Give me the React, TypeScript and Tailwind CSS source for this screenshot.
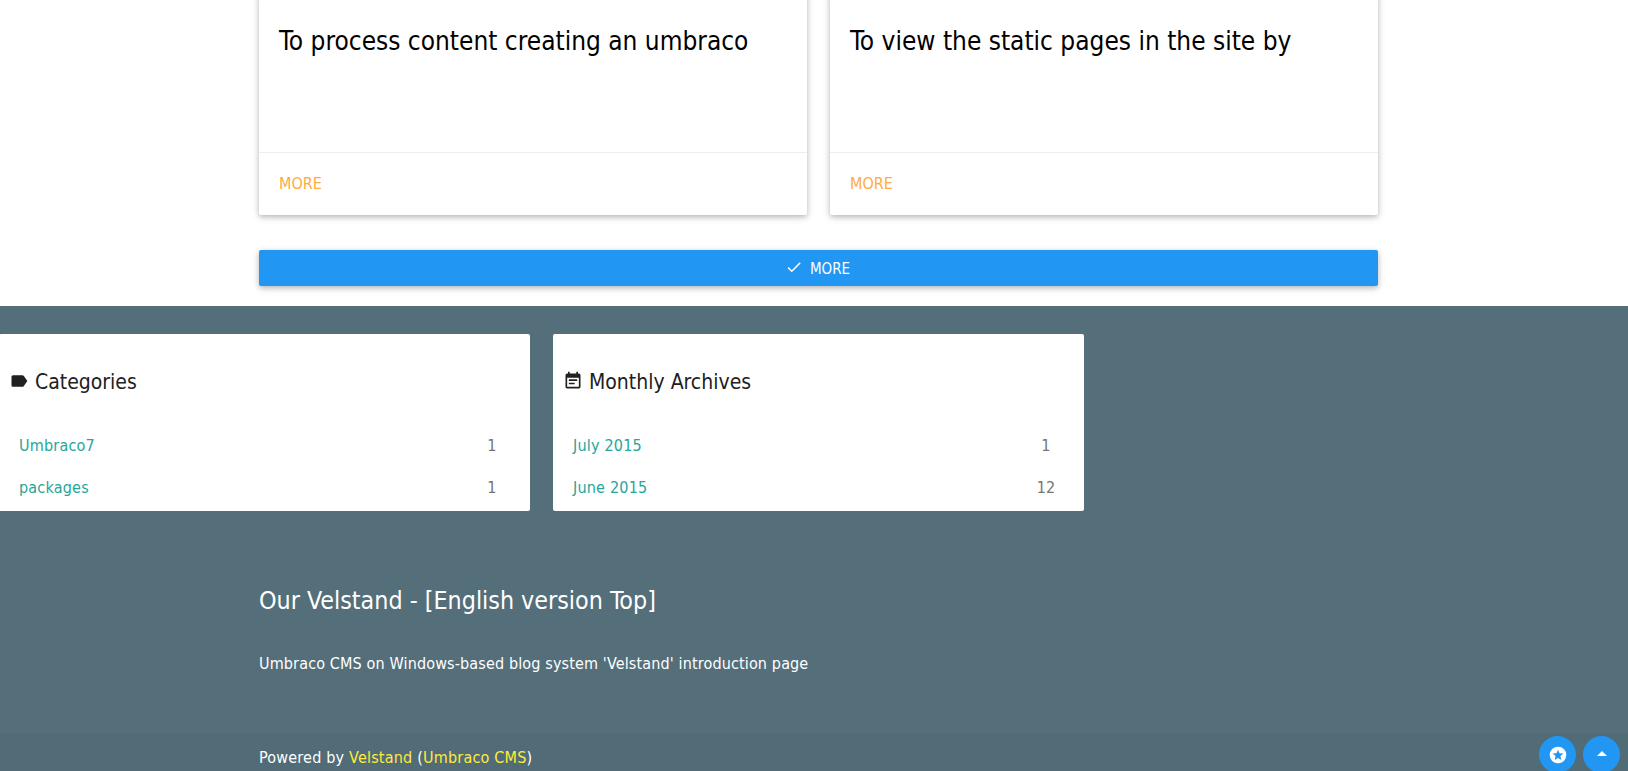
import React from "react";

const font = { fontFamily: '"DejaVu Sans Condensed", "DejaVu Sans", sans-serif' };
const shadow = "shadow-[0_2px_5px_0_rgba(0,0,0,0.2),0_2px_10px_0_rgba(0,0,0,0.12)]";

function Card({ text }: { text: string }) {
  return (
    <div className={`flex-1 bg-white rounded-[2px] ${shadow}`}>
      <div className="h-[163px] border-b border-[#eeeeee] px-5 pt-[33px]">
        <p className="text-[26px] leading-[36px] text-black">{text}</p>
      </div>
      <div className="h-[62px] px-5 pt-[19px]">
        <a className="text-[16px] leading-[22px] text-[#ffab40]">MORE</a>
      </div>
    </div>
  );
}

function Widget({ icon, title, rows }: { icon: React.ReactNode; title: string; rows: [string, string][] }) {
  return (
    <div className="w-[531px] h-[177px] bg-white rounded-[2px] pt-[34px]">
      <div className="flex items-center pl-[10px] h-[28px]">
        {icon}
        <span className="text-[21px] leading-[28px] text-[#212121] ml-[6px]">{title}</span>
      </div>
      <div className="mt-[29px]">
        {rows.map(([a, b]) => (
          <div key={a} className="flex justify-between h-[42px] pl-[20px] pr-[28px] text-[16px] leading-[42px] tracking-[0.2px]">
            <a className="text-[#26a69a]">{a}</a>
            <span className="text-[#757575] w-[20px] text-center">{b}</span>
          </div>
        ))}
      </div>
    </div>
  );
}

const LabelIcon = () => (
  <svg viewBox="0 0 24 24" width="20" height="20" className="fill-[#212121] -mt-[3px]">
    <path d="M17.63 5.84C17.27 5.33 16.67 5 16 5L5 5.01C3.9 5.01 3 5.9 3 7v10c0 1.1.9 1.99 2 1.99L16 19c.67 0 1.27-.33 1.63-.84L22 12l-4.37-6.16z" />
  </svg>
);

const EventNoteIcon = () => (
  <svg viewBox="0 0 24 24" width="20" height="20" className="fill-[#212121] -mt-[3px]">
    <path d="M17 10H7v2h10v-2zm2-7h-1V1h-2v2H8V1H6v2H5c-1.11 0-1.99.9-1.99 2L3 19c0 1.1.89 2 2 2h14c1.1 0 2-.9 2-2V5c0-1.1-.9-2-2-2zm0 16H5V8h14v11zm-5-5H7v2h7v-2z" />
  </svg>
);

export default function App() {
  return (
    <div className="relative h-[771px] w-full overflow-hidden bg-white" style={font}>
      <main className="h-[316px] -mt-[10px]">
        <div className="w-[1119px] ml-[259px]">
          <div className="flex gap-[23px]">
            <Card text="To process content creating an umbraco" />
            <Card text="To view the static pages in the site by" />
          </div>
          <button className={`mt-[35px] w-full h-[36px] bg-[#2196f3] text-white rounded-[2px] flex items-center justify-center gap-[7px] text-[15px] pt-[3px] pr-[2px] ${shadow}`}>
            <svg viewBox="0 0 24 24" width="18" height="18" className="fill-white -mt-[5px]">
              <path d="M9 16.17 4.83 12l-1.42 1.41L9 19 21 7l-1.41-1.41z" />
            </svg>
            <span>MORE</span>
          </button>
        </div>
      </main>
      <footer className="h-[465px] bg-[#546e7a] flex flex-col">
        <div className="flex gap-[23px] -ml-px pt-[28px]">
          <Widget icon={<LabelIcon />} title="Categories" rows={[["Umbraco7", "1"], ["packages", "1"]]} />
          <Widget icon={<EventNoteIcon />} title="Monthly Archives" rows={[["July 2015", "1"], ["June 2015", "12"]]} />
        </div>
        <div className="ml-[259px] mt-[74px] text-white">
          <h2 className="text-[24.8px] leading-[32px]">Our Velstand - [English version Top]</h2>
          <p className="mt-[35px] text-[16px] leading-[24px] tracking-[0.14px]">Umbraco CMS on Windows-based blog system 'Velstand' introduction page</p>
        </div>
        <div className="mt-auto h-[38px] bg-[#516b77] pl-[259px] text-white text-[16px] leading-[50px] tracking-[0.2px]">
          Powered by <a className="text-[#ffeb3b]">Velstand</a> (<a className="text-[#ffeb3b]">Umbraco CMS</a>)
        </div>
      </footer>
      <div className="absolute left-[1539px] top-[736px] flex gap-[7px]">
        <button className="w-[37px] h-[37px] rounded-full bg-[#2196f3] flex items-center justify-center">
          <svg viewBox="0 0 24 24" width="20" height="20">
            <circle cx="12" cy="12" r="10" fill="#fff" />
            <path fill="#2196f3" d="M12 5.6l1.8 4.3 4.7.4-3.6 3 1.1 4.6-4-2.4-4 2.4 1.1-4.6-3.6-3 4.7-.4z" />
          </svg>
        </button>
        <button className="w-[37px] h-[37px] rounded-full bg-[#2196f3] flex items-center justify-center">
          <svg viewBox="0 0 24 24" width="24" height="24" className="fill-white -mt-[2px]">
            <path d="M7 14l5-5 5 5z" />
          </svg>
        </button>
      </div>
    </div>
  );
}
